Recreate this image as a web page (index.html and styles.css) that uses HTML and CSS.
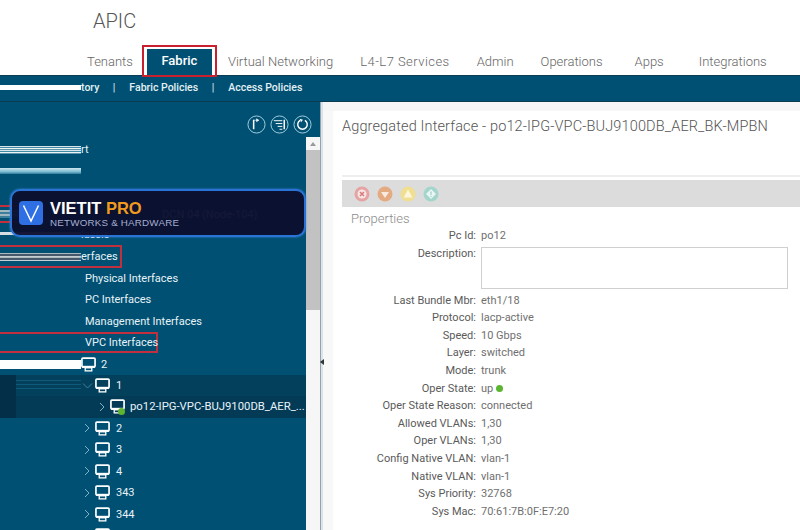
FILE: index.html
```html
<!DOCTYPE html>
<html lang="en">
<head>
    <meta charset="UTF-8">
    <meta name="viewport" content="width=device-width, initial-scale=1.0">
    <title>APIC</title>
    <link rel="stylesheet" href="styles.css">
</head>
<body>
    <svg class="defs" width="0" height="0">
        <symbol id="monitor" viewBox="0 0 16 16">
            <rect x="1" y="1.2" width="14" height="9.300" rx="1" fill="none" stroke="#fff" stroke-width="1.800"/>
            <path d="M1 10.5h14" stroke="#fff" stroke-width="2.200"/>
            <rect x="4.5" y="11.5" width="7" height="3.300" fill="none" stroke="#fff" stroke-width="1.400"/>
        </symbol>
        <symbol id="chevron-right" viewBox="0 0 8 12">
            <path d="M2 2l4 4-4 4" fill="none" stroke="#7fb2c8" stroke-width="1"/>
        </symbol>
        <symbol id="chevron-down" viewBox="0 0 12 8">
            <path d="M2 1.5l4.5 4.5 4.5-4.5" fill="none" stroke="#3d83a3" stroke-width="1"/>
        </symbol>
    </svg>

    <header class="top">
        <div class="brand">APIC</div>
        <nav class="tabs">
            <a class="tab tab-tenants">Tenants</a>
            <a class="tab tab-active">Fabric</a>
            <a class="tab tab-vn">Virtual Networking</a>
            <a class="tab tab-l4">L4-L7 Services</a>
            <a class="tab tab-admin">Admin</a>
            <a class="tab">Operations</a>
            <a class="tab tab-apps">Apps</a>
            <a class="tab tab-int">Integrations</a>
        </nav>
    </header>

    <div class="subbar">
        <span class="smear smear-white"></span>
        <span class="sub-link">tory</span>
        <span class="sub-sep">|</span>
        <span class="sub-link">Fabric Policies</span>
        <span class="sub-sep">|</span>
        <span class="sub-link">Access Policies</span>
    </div>

    <div class="main">
        <aside class="side">
            <div class="side-tools">
                <svg class="tool" viewBox="0 0 20 20">
                    <circle cx="10" cy="10" r="9" fill="none" stroke="#a9d3e2"/>
                    <path d="M7 5v10" stroke="#fff" stroke-width="1.6" fill="none"/>
                    <path d="M7 5.5h3M10 4l2.5 1.5L10 7z" stroke="#fff" fill="#fff" stroke-width=".6"/>
                </svg>
                <svg class="tool" viewBox="0 0 20 20">
                    <circle cx="10" cy="10" r="9" fill="none" stroke="#a9d3e2"/>
                    <path d="M4 6h9M6 9h7M8 12h5M10 15h3" stroke="#fff" fill="none"/>
                    <path d="M15 5v10" stroke="#fff" stroke-width="1.6" fill="none"/>
                </svg>
                <svg class="tool" viewBox="0 0 20 20">
                    <circle cx="10" cy="10" r="9" fill="none" stroke="#a9d3e2"/>
                    <path d="M12.5 5.6a5 5 0 1 1-5 0" fill="none" stroke="#fff" stroke-width="1.5"/>
                    <path d="M7 4l3.5 1-2 2.5z" fill="#fff"/>
                </svg>
            </div>

            <div class="tree-wrap">
                <ul class="tree">
                    <li class="row"><span class="smear smear-stripes"></span><span class="row-text">rt</span></li>
                    <li class="row"><span class="smear smear-blue"></span></li>
                    <li class="row"></li>
                    <li class="row"><span class="mark mark-hidden"><span class="smear smear-stripes-short"></span></span><span class="row-hidden">DCN 04 (Node-104)</span></li>
                    <li class="row"><span class="smear smear-thin"></span><span class="row-text">lassis</span></li>
                    <li class="row"><span class="mark mark-if"><span class="smear smear-dark"></span><span class="row-text">erfaces</span></span></li>
                    <li class="row row-sub">Physical Interfaces</li>
                    <li class="row row-sub">PC Interfaces</li>
                    <li class="row row-sub">Management Interfaces</li>
                    <li class="row"><span class="mark mark-vpc"><span class="mark-label">VPC Interfaces</span></span></li>
                    <li class="row">
                        <span class="smear smear-white-tall"></span>
                        <svg class="mon"><use href="#monitor"/></svg>
                        <span class="node-label">2</span>
                    </li>
                    <li class="row row-open">
                        <span class="smear smear-faint"></span>
                        <svg class="chev-down"><use href="#chevron-down"/></svg>
                        <svg class="mon"><use href="#monitor"/></svg>
                        <span class="node-label node-open">1</span>
                    </li>
                    <li class="row row-selected">
                        <svg class="chev chev-deep"><use href="#chevron-right"/></svg>
                        <span class="mon-wrap">
                            <svg class="mon"><use href="#monitor"/></svg>
                            <span class="status-dot"></span>
                        </span>
                        <span class="node-label node-long">po12-IPG-VPC-BUJ9100DB_AER_...</span>
                    </li>
                    <li class="row row-node"><svg class="chev"><use href="#chevron-right"/></svg><svg class="mon"><use href="#monitor"/></svg><span class="node-label">2</span></li>
                    <li class="row row-node"><svg class="chev"><use href="#chevron-right"/></svg><svg class="mon"><use href="#monitor"/></svg><span class="node-label">3</span></li>
                    <li class="row row-node"><svg class="chev"><use href="#chevron-right"/></svg><svg class="mon"><use href="#monitor"/></svg><span class="node-label">4</span></li>
                    <li class="row row-node"><svg class="chev"><use href="#chevron-right"/></svg><svg class="mon"><use href="#monitor"/></svg><span class="node-label">343</span></li>
                    <li class="row row-node"><svg class="chev"><use href="#chevron-right"/></svg><svg class="mon"><use href="#monitor"/></svg><span class="node-label">344</span></li>
                    <li class="row row-node"><svg class="chev"><use href="#chevron-right"/></svg><svg class="mon"><use href="#monitor"/></svg></li>
                </ul>
                <div class="scrollbar">
                    <div class="scroll-up"></div>
                    <div class="scroll-thumb"></div>
                </div>
            </div>

            <div class="badge">
                <svg class="badge-logo" viewBox="0 0 24 24">
                    <rect width="24" height="24" rx="4" fill="#2f6fe4"/>
                    <path d="M4.5 4.5L12 20l7.5-15.500" fill="none" stroke="#fff" stroke-width="1.5"/>
                </svg>
                <div class="badge-text">
                    <div class="badge-title">VIETIT <span class="badge-pro">PRO</span></div>
                    <div class="badge-sub">NETWORKS &amp; HARDWARE</div>
                </div>
            </div>
        </aside>

        <div class="splitter"><span class="split-arrow"></span></div>

        <section class="pane">
            <h2 class="pane-title">Aggregated Interface - po12-IPG-VPC-BUJ9100DB_AER_BK-MPBN</h2>
            <div class="faults">
                <svg class="fault" viewBox="0 0 16 16"><circle cx="8" cy="8" r="7.500" fill="#e6a3a3"/><circle cx="8" cy="8" r="4.500" fill="#f7e6e6"/><path d="M6 6l4 4M10 6l-4 4" stroke="#d97c7c" stroke-width="1.600"/></svg>
                <svg class="fault" viewBox="0 0 16 16"><circle cx="8" cy="8" r="7.500" fill="#e4ab82"/><path d="M4 6h8l-4 6z" fill="#f9eadf"/></svg>
                <svg class="fault" viewBox="0 0 16 16"><circle cx="8" cy="8" r="7.500" fill="#f0df90"/><path d="M8 3.500l4.500 8h-9z" fill="#fbf6dc"/></svg>
                <svg class="fault" viewBox="0 0 16 16"><circle cx="8" cy="8" r="7.500" fill="#a2d5cb"/><path d="M8 3l5 5-5 5-5-5z" fill="#e9f6f3"/><path d="M8 5.500v3.500M8 10v1" stroke="#8cc9bd"/></svg>
            </div>
            <h3 class="props-title">Properties</h3>
            <dl class="props">
                <dt>Pc Id:</dt><dd>po12</dd>
                <dt>Description:</dt><dd><div class="desc-box"></div></dd>
                <dt>Last Bundle Mbr:</dt><dd>eth1/18</dd>
                <dt>Protocol:</dt><dd>lacp-active</dd>
                <dt>Speed:</dt><dd>10 Gbps</dd>
                <dt>Layer:</dt><dd>switched</dd>
                <dt>Mode:</dt><dd>trunk</dd>
                <dt>Oper State:</dt><dd>up <span class="up-dot"></span></dd>
                <dt>Oper State Reason:</dt><dd>connected</dd>
                <dt>Allowed VLANs:</dt><dd>1,30</dd>
                <dt>Oper VLANs:</dt><dd>1,30</dd>
                <dt>Config Native VLAN:</dt><dd>vlan-1</dd>
                <dt>Native VLAN:</dt><dd>vlan-1</dd>
                <dt>Sys Priority:</dt><dd>32768</dd>
                <dt>Sys Mac:</dt><dd>70:61:7B:0F:E7:20</dd>
            </dl>
        </section>
    </div>
</body>
</html>
```

FILE: styles.css
```css
* {
    box-sizing: border-box;
}
html, body {
    height: 100%;
}
body {
    margin: 0;
    font-family: Roboto, "Liberation Sans", Arial, sans-serif;
    background-color: #fff;
    color: #555;
    overflow: hidden;
    display: flex;
    flex-direction: column;
}
.defs {
    display: block;
    height: 0;
}

/* header */
.top {
    height: 75px;
    flex: none;
    padding-left: 73px;
    display: flex;
    flex-direction: column;
}
.brand {
    font-size: 20px;
    font-weight: 300;
    color: #555;
    padding: 10px 0 0 20px;
    line-height: 23px;
}
.tabs {
    display: flex;
    margin-top: auto;
    font-size: 13px;
    font-weight: 300;
}
.tab {
    height: 30px;
    padding: 9px 14px 0;
    color: #666;
}
.tab-tenants {
    padding-right: 9px;
}
.tab-active {
    width: 75px;
    height: 32px;
    margin-bottom: -2px;
    padding: 2px 3px 0;
    background-color: #005073;
    background-clip: content-box;
    border: 2px solid #c8202e;
    color: #fff;
    font-weight: 500;
    text-align: center;
    line-height: 24px;
    position: relative;
}
.tab-vn {
    padding-left: 11px;
}
.tab-l4 {
    padding-left: 13px;
    padding-right: 13px;
    letter-spacing: 0.45px;
}
.tab-admin {
    padding-right: 13px;
}
.tab-apps {
    padding-left: 18px;
    padding-right: 18px;
}
.tab-int {
    padding-left: 17px;
}

/* sub navigation */
.subbar {
    height: 27px;
    flex: none;
    display: flex;
    align-items: center;
    padding-bottom: 2px;
    background-color: #005073;
    border-top: 1px solid #0b3c54;
    border-bottom: 1px solid #0b3c54;
    font-size: 10.500px;
    font-weight: 500;
    color: #e4f0f5;
}
.sub-sep {
    margin: 0 14px 0 13.500px;
    font-weight: 400;
}
.smear {
    display: block;
    flex: none;
    width: 81px;
}
.smear-white {
    height: 5px;
    background: #fff;
}

/* main */
.main {
    flex: 1;
    display: flex;
    min-height: 0;
}
.side {
    width: 320px;
    flex: none;
    display: flex;
    flex-direction: column;
    position: relative;
    background-color: #005073;
}
.side-tools {
    height: 35px;
    flex: none;
    display: flex;
    justify-content: flex-end;
    gap: 4px;
    padding: 13px 8px 0 0;
}
.tool {
    width: 19px;
    height: 19px;
}
.tree-wrap {
    flex: 1;
    display: flex;
    min-height: 0;
}
.tree {
    flex: 1;
    min-width: 0;
    margin: 0;
    padding: 2px 0 0;
    list-style: none;
    overflow: hidden;
    font-size: 11px;
    color: #e8f3f7;
}
.row {
    height: 21.45px;
    display: flex;
    align-items: center;
    white-space: nowrap;
}
.row-sub {
    padding-left: 85px;
}
.row-text {
    line-height: 14px;
}
.smear-stripes {
    height: 8px;
    background: repeating-linear-gradient(#d8e4e8 0 1px, #3f8aa8 1px 2px, #eef3f4 2px 3px, #5d96ac 3px 4px);
}
.smear-blue {
    height: 6px;
    background: linear-gradient(#cfe6ee, #7fbdd3 60%, #2f7d9c);
}
.smear-stripes-short {
    width: 100%;
    height: 8px;
    background: repeating-linear-gradient(#9fb7c0 0 2px, #3d7f99 2px 4px);
}
.smear-thin {
    height: 3px;
    margin-top: -4px;
    background: #d5dfe3;
}
.smear-dark {
    width: 81px;
    height: 8px;
    background: repeating-linear-gradient(#a9b6bd 0 1px, #46586a 1px 3px, #c5ced2 3px 4px);
}
.smear-white-tall {
    height: 9px;
    background: #fdfefe;
}
.smear-faint {
    height: 12px;
    width: 65px;
    margin-left: 16px;
    background: repeating-linear-gradient(#0f5a7a 0 1px, transparent 1px 4px);
}
.mark {
    display: flex;
    align-items: center;
    border: 2px solid #c23040;
    border-left: 0;
}
.mark-hidden {
    width: 30px;
    height: 18px;
}
.row-hidden {
    margin-left: 132px;
    color: #fff;
}
.mark-if {
    width: 122px;
    height: 23px;
}
.mark-vpc {
    width: 158px;
    height: 21px;
    padding-left: 85px;
}
.mon {
    width: 15px;
    height: 15px;
    flex: none;
}
.node-label {
    margin-left: 5px;
}
.node-open {
    margin-left: 6px;
}
.node-long {
    font-size: 11.300px;
}
.row-open {
    background: linear-gradient(90deg, #032f48 0 16px, #03405c 16px);
}
.row-selected {
    padding-left: 98px;
    background: linear-gradient(90deg, #032f48 0 16px, #033b57 16px);
}
.chev-down {
    width: 12px;
    height: 8px;
    flex: none;
    margin-right: 2px;
}
.chev {
    width: 8px;
    height: 12px;
    flex: none;
}
.chev-deep {
    margin-right: 4px;
}
.row-node {
    padding-left: 83px;
}
.row-node .chev {
    margin-right: 4px;
}
.row-node .node-label {
    margin-left: 6px;
}
.mon-wrap {
    position: relative;
    display: flex;
    flex: none;
}
.status-dot {
    position: absolute;
    right: 0;
    bottom: -1px;
    width: 7px;
    height: 7px;
    border-radius: 50%;
    background-color: #5cb531;
}
.scrollbar {
    width: 14px;
    flex: none;
    background-color: #f6f6f6;
}
.scroll-up {
    height: 13px;
    position: relative;
}
.scroll-up::before {
    content: "";
    position: absolute;
    left: 4px;
    top: 5px;
    border: 3px solid transparent;
    border-top: 0;
    border-bottom: 4px solid #9a9a9a;
}
.scroll-thumb {
    height: 160px;
    background-color: #c2c2c2;
}

/* badge over the tree */
.badge {
    position: absolute;
    left: 10px;
    top: 87px;
    width: 296px;
    height: 48px;
    display: flex;
    align-items: center;
    gap: 7px;
    padding-left: 7px;
    background-color: rgba(11, 15, 46, 0.96);
    border: 2px solid #2a74d8;
    border-radius: 10px;
    box-shadow: 0 0 2px #4a90ea;
}
.badge-logo {
    width: 24px;
    height: 24px;
    flex: none;
}
.badge-title {
    font-family: "Liberation Sans", Arial, sans-serif;
    font-size: 16.500px;
    font-weight: bold;
    line-height: 18px;
    color: #fff;
}
.badge-pro {
    color: #f09a1e;
}
.badge-sub {
    font-family: "Liberation Sans", Arial, sans-serif;
    font-size: 9.800px;
    letter-spacing: 0.2px;
    line-height: 11px;
    color: #a3aed0;
}

/* splitter */
.splitter {
    width: 3px;
    flex: none;
    position: relative;
    background-color: #dfe3e6;
    border-left: 1px solid #8ba6b5;
}
.split-arrow {
    position: absolute;
    left: -1px;
    top: 257px;
    border: 3px solid transparent;
    border-left: 0;
    border-right: 4px solid #333;
}

/* right pane */
.pane {
    flex: 1;
    min-width: 0;
    padding: 9px 0 0 19px;
    background: linear-gradient(#f6f6f6 0 9px, transparent 9px), linear-gradient(90deg, #f8f8f8 0 10px, #fff 10px);
}
.pane-title {
    margin: 0;
    height: 66px;
    padding-top: 7px;
    border-bottom: 2px solid #eee;
    font-size: 14.500px;
    font-weight: 300;
    letter-spacing: 0.14px;
    line-height: 18px;
    color: #555;
    white-space: nowrap;
}
.faults {
    height: 27px;
    margin-top: 3px;
    display: flex;
    align-items: center;
    gap: 7px;
    padding-left: 12px;
    background-color: #dcdcdc;
}
.fault {
    width: 16px;
    height: 16px;
}
.props-title {
    margin: 4px 0 0 9px;
    font-size: 13px;
    font-weight: 300;
    line-height: 16px;
    color: #8a8a8a;
}
.props {
    display: grid;
    grid-template-columns: 134px 1fr;
    column-gap: 5px;
    margin: 0;
    font-size: 11px;
    line-height: 17.600px;
}
.props dt {
    text-align: right;
    color: #5a5a5a;
}
.props dd {
    margin: 0;
    color: #6f6f6f;
}
.desc-box {
    width: 307px;
    height: 42px;
    margin: 2px 0 3px;
    border: 1px solid #cfcfcf;
    background-color: #fff;
}
.up-dot {
    display: inline-block;
    width: 7px;
    height: 7px;
    border-radius: 50%;
    background-color: #5cb531;
}
```
